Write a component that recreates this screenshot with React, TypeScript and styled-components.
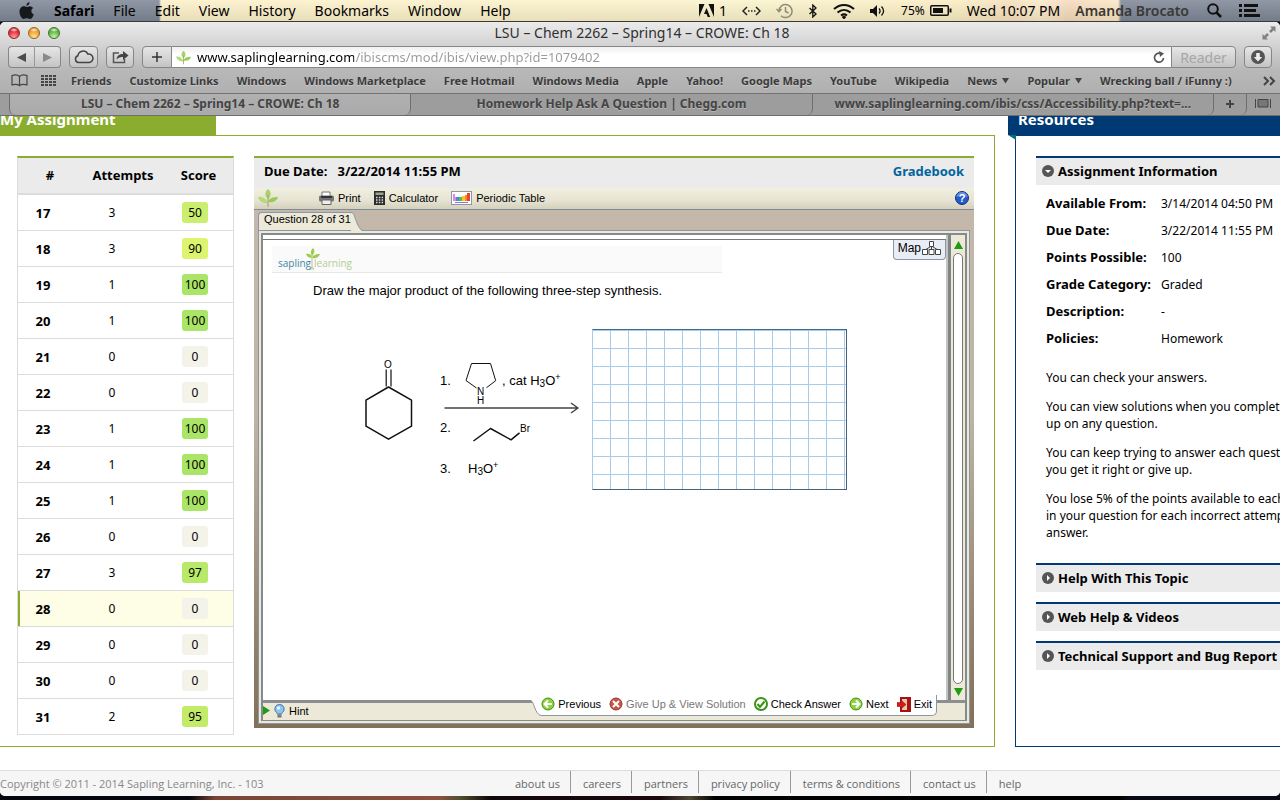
import React from 'react';
import styled, { createGlobalStyle, css } from 'styled-components';

const ui = '"Lucida Grande", "Noto Sans", "Open Sans", sans-serif';
const page = '"Noto Sans", "Open Sans", sans-serif';
const openSans = '"Open Sans", "Noto Sans", sans-serif';
const arial = '"Liberation Sans", Arial, sans-serif';
const green = '#8aad30';
const navy = '#003a75';

const GlobalStyle = createGlobalStyle`
  * { box-sizing: border-box; }
  body { margin: 0; background: #000; font-family: ${page}; font-size: 12px; color: #000; overflow-x: hidden; }
  button { font: inherit; color: inherit; border: 0; padding: 0; background: none; cursor: pointer; }
  a { color: inherit; text-decoration: none; }
  h1, h2, h3, p, dl, dd, ul { margin: 0; padding: 0; }
  svg { display: block; flex: none; }
`;

const Desktop = styled.div`
  min-height: 100vh;
  display: flex;
  flex-direction: column;
  overflow: hidden;
  padding-bottom: 4px;
  background: linear-gradient(90deg, #04060e 0 190px, #7a4535 215px, #8a5040 440px, #4f5032 460px, #10080a 490px, #1c080c 660px, #4b4733 690px, #000 715px, #000 1120px, #070a16 1130px);
`;

/* System menu bar */
const MenuBar = styled.header`
  height: 22px;
  flex: none;
  display: flex;
  align-items: center;
  padding: 0 20px 0 18px;
  font-family: ${ui};
  font-size: 14px;
  line-height: 20px;
  background:
    linear-gradient(180deg, rgba(255, 255, 255, 0.15), rgba(0, 0, 0, 0.08)),
    linear-gradient(90deg, #7d8696 0 159px, #fdf0c8 161px, #fbf3cb 60%, #f9ecc0 75%, #f6dfbb 1010px, #fbe9c8 1040px, #f5d9bb 1070px, #fbe6c2 1118px, #7d8696 1121px);
  border-bottom: 1px solid #3c3a35;
`;
const Menus = styled.nav`
  display: flex;
  align-items: center;
  gap: 19px;
`;
const MenuItem = styled.button<{ $bold?: boolean }>`
  font-weight: ${(p) => (p.$bold ? 700 : 400)};
`;
const Extras = styled.div`
  margin-left: auto;
  display: flex;
  align-items: center;
  gap: 15px;
`;
const Cluster = styled.span`
  display: flex;
  align-items: center;
  gap: 5px;
`;
const Small = styled.span`
  font-size: 12px;
`;
const UserName = styled.span`
  font-weight: 600;
  color: #3a3834;
`;

/* Browser window */
const Window = styled.div`
  flex: 1;
  display: flex;
  flex-direction: column;
  background: #fff;
  border-radius: 5px;
  overflow: hidden;
`;
const Chrome = styled.div`
  font-family: ${ui};
  background: linear-gradient(180deg, #ebebeb, #d2d2d2 24px, #b8b8b8 48px, #b0b0b0 71px);
`;
const TitleRow = styled.div`
  height: 24px;
  display: grid;
  grid-template-columns: 1fr auto 1fr;
  align-items: center;
  padding: 0 4px 2px 8px;
`;
const Lights = styled.div`
  display: flex;
  gap: 8px;
`;
const Light = styled.button<{ $c: string; $d: string; $l: string }>`
  width: 12px;
  height: 12px;
  border-radius: 50%;
  border: 1px solid ${(p) => p.$d};
  background:
    radial-gradient(ellipse 4px 2px at 50% 20%, rgba(255, 255, 255, 0.85), transparent),
    radial-gradient(circle at 50% 90%, ${(p) => p.$l}, ${(p) => p.$c} 60%);
`;
const WindowTitle = styled.h1`
  font-size: 14px;
  line-height: 20px;
  font-weight: 400;
  color: #2f2f2f;
`;
const FullScreen = styled.button`
  justify-self: end;
`;
const Toolbar = styled.div`
  display: flex;
  gap: 8px;
  padding: 0 8px;
  height: 22px;
`;
const ToolButton = styled.button<{ $w: number }>`
  width: ${(p) => p.$w}px;
  height: 22px;
  display: flex;
  align-items: center;
  justify-content: center;
  border: 1px solid #868686;
  border-radius: 4px;
  background: linear-gradient(180deg, #e6e6e6, #c4c4c4);
  color: #444;
`;
const Pair = styled.div`
  display: flex;
  button:first-child { border-radius: 4px 0 0 4px; border-right: 1px solid #999; }
  button:last-child { border-radius: 0 4px 4px 0; border-left: 0; }
`;
const AddressBar = styled.div`
  flex: 1;
  display: flex;
  min-width: 0;
  > button:first-child { border-radius: 4px 0 0 4px; }
  > button:last-child { border-radius: 0 4px 4px 0; color: #a6a6a6; font-size: 14px; }
`;
const Field = styled.label`
  flex: 1;
  min-width: 0;
  display: flex;
  align-items: center;
  gap: 6px;
  padding: 0 6px 0 4px;
  border: solid #868686;
  border-width: 1px 0;
  background: linear-gradient(180deg, #f0f0f0, #fff 40%);
`;
const UrlInput = styled.input`
  flex: 1;
  min-width: 0;
  border: 0;
  padding: 0;
  outline: 0;
  font: 13px/18px ${ui};
  color: transparent;
  background: linear-gradient(90deg, #000 157px, #999 157px);
  -webkit-background-clip: text;
  background-clip: text;
`;
const Bookmarks = styled.nav`
  height: 25px;
  display: flex;
  align-items: center;
  gap: 18px;
  padding: 0 4px 0 11px;
  font-size: 11px;
  font-weight: 700;
  color: #3b3b3b;
  text-shadow: 0 1px 0 #c8c8c8;
  white-space: nowrap;
`;
const BookmarkTools = styled.div`
  display: flex;
  align-items: center;
  gap: 13px;
  margin-right: -3px;
`;
const Bookmark = styled.a`
  display: flex;
  align-items: center;
  gap: 5px;
`;
const More = styled.button`
  margin-left: auto;
`;
const Tabs = styled.div`
  height: 23px;
  display: flex;
  padding-left: 9px;
  border-top: 1px solid #747474;
  border-bottom: 1px solid #6e6e6e;
  background: #9d9d9d;
`;
const Tab = styled.button<{ $active?: boolean; $w?: number }>`
  flex: ${(p) => (p.$w ? `0 0 ${p.$w}px` : '1 1 0')};
  min-width: 0;
  display: flex;
  align-items: center;
  justify-content: center;
  padding-bottom: 2px;
  overflow: hidden;
  font-size: 12px;
  font-weight: 700;
  white-space: nowrap;
  color: #444;
  text-shadow: 0 1px 0 #b8b8b8;
  border-right: 1px solid #6e6e6e;
  border-radius: 0 0 6px 0;
  ${(p) =>
    p.$active &&
    css`
      background: linear-gradient(180deg, #b0b0b0, #aaa);
      border-left: 1px solid #6e6e6e;
      border-radius: 0 0 6px 6px;
    `}
  &:last-child { border-right: 0; }
`;

/* Page */
const Body = styled.main`
  display: flex;
  gap: 13px;
`;
const Assignment = styled.section`
  flex: 1;
  min-width: 0;
`;
const SectionTab = styled.h2<{ $c: string; $w?: number; $pad?: number }>`
  height: 19px;
  width: ${(p) => (p.$w ? `${p.$w}px` : 'auto')};
  padding-left: ${(p) => p.$pad ?? 0}px;
  overflow: hidden;
  background: ${(p) => p.$c};
  color: #fff;
  font-size: 15px;
  line-height: 6px;
  white-space: nowrap;
`;
const AssignmentBox = styled.div`
  display: flex;
  align-items: flex-start;
  gap: 20px;
  padding: 20px 20px 11px 17px;
  border: 1px solid ${green};
  border-left: 0;
`;

const ScoreTable = styled.table`
  width: 217px;
  flex: none;
  border-collapse: separate;
  border-spacing: 0;
  table-layout: fixed;
  border: 1px solid #dcdcdc;
  border-top: 2px solid ${green};
  border-bottom: 0;
  th, td { padding: 0; text-align: center; }
  th { font-size: 13px; }
  thead th { height: 37px; padding-bottom: 2px; background: #ebebeb; border-bottom: 2px solid #dcdcdc; }
`;
const NumHead = styled.th`
  width: 64px;
`;
const AttemptHead = styled.th`
  width: 82px;
`;
const Row = styled.tr<{ $current?: boolean }>`
  > * { height: 36px; border-bottom: 1px solid #dcdcdc; }
  ${(p) =>
    p.$current &&
    css`
      background: #fefde6;
      > th { box-shadow: inset 2px 0 0 ${green}; }
    `}
`;
const NumCell = styled.th`
  && { padding-right: 14px; }
`;
const AttemptCell = styled.td`
  && { padding-right: 22px; }
`;
const ScoreCell = styled.td`
  && { padding-right: 7px; }
`;
const Score = styled.span<{ $c: string }>`
  display: inline-block;
  min-width: 26px;
  padding: 0 3px;
  border-radius: 3px;
  line-height: 21px;
  background: ${(p) => p.$c};
`;

const Question = styled.article`
  flex: 1;
  min-width: 0;
  border-top: 2px solid ${green};
`;
const QuestionHead = styled.div`
  height: 30px;
  display: flex;
  justify-content: space-between;
  padding: 0 10px;
  background: #ebebeb;
  font-size: 13px;
  font-weight: 700;
  line-height: 27px;
`;
const DueLabel = styled.span`
  margin-right: 10px;
`;
const GradeLink = styled.a`
  color: #00649d;
`;
const AppBar = styled.div`
  height: 22px;
  display: flex;
  align-items: center;
  gap: 13px;
  padding: 0 5px 2px 4px;
  background: linear-gradient(180deg, #f1efdf, #e6e3d2 60%, #d3d0bd);
  border-bottom: 1px solid #7f8b99;
  font-family: ${arial};
  font-size: 11px;
`;
const LeafMark = styled.span`
  margin-right: 28px;
`;
const IconButton = styled.button<{ $muted?: boolean }>`
  display: flex;
  align-items: center;
  gap: 4px;
  white-space: nowrap;
  color: ${(p) => (p.$muted ? '#777' : '#000')};
`;
const HelpButton = styled.button`
  margin-left: auto;
`;
const Stage = styled.div`
  padding: 2px 4px 4px;
  background: linear-gradient(180deg, #c3b8aa 0%, #bfb3a3 40%, #8f7f6a 85%, #837058);
  font-family: ${arial};
`;
const QuestionTab = styled.div`
  display: flex;
  width: max-content;
  height: 18px;
  font-size: 11px;
  line-height: 12px;
`;
const TabLabel = styled.span`
  padding-left: 5px;
  background: #ece9d8;
  border: solid #8a97a6;
  border-width: 1px 0 0 1px;
  border-radius: 4px 0 0 0;
`;
const Frame = styled.div`
  padding: 2px;
  border: 1px solid #8a97a6;
  background: #ece9d8;
`;
const Inner = styled.div`
  border: 2px solid #868a8a;
  border-bottom-width: 1px;
`;
const Work = styled.div`
  display: flex;
  height: 468px;
  border-bottom: 3px solid #8b8f8f;
`;
const Sheet = styled.div`
  position: relative;
  flex: 1;
  min-width: 0;
  padding-top: 4px;
  background: #fff;
  border-right: 2px solid #c4c4c4;
`;
const SheetBody = styled.div`
  border-top: 1px solid #777;
`;
const BrandStrip = styled.div`
  width: 450px;
  height: 27px;
  margin: 6px 0 0 9px;
  padding: 1px 0 0 6px;
  background: #fafafa;
  border-bottom: 1px solid #e8e8e8;
`;
const Prompt = styled.p`
  margin: 9px 0 0 50px;
  font-size: 13px;
  line-height: 18px;
`;
const Drawing = styled.div`
  display: flex;
  margin: 29px 0 0 97px;
`;
const Canvas = styled.div`
  width: 255px;
  height: 161px;
  border: 1px solid #4a6076;
  border-top-color: #41688e;
  border-left-color: #a7cbee;
  background:
    linear-gradient(#a7cbee 1px, transparent 1px) 0 0 / 18px 18px,
    linear-gradient(90deg, #a7cbee 1px, transparent 1px) 17px 0 / 18px 18px;
`;
const MapButton = styled.button`
  position: absolute;
  top: 5px;
  right: 0;
  height: 20px;
  display: flex;
  align-items: center;
  gap: 1px;
  padding: 0 4px 3px 4px;
  font-size: 12px;
  background: #e9eef6;
  border: 1px solid #8a97a6;
  border-top: 0;
  border-radius: 0 0 4px 4px;
`;
const ScrollBar = styled.div`
  width: 17px;
  display: flex;
  flex-direction: column;
  align-items: center;
  gap: 4px;
  padding: 6px 0 4px;
  background: #ece9d8;
  border-left: 3px solid #808585;
`;
const Thumb = styled.div`
  flex: 1;
  width: 10px;
  background: #fff;
  border: 1px solid #777;
  border-radius: 5px;
`;
const StatusBar = styled.div`
  position: relative;
  height: 17px;
  display: flex;
  align-items: center;
  padding: 0 0 2px;
  font-size: 11px;
`;
const Actions = styled.div`
  position: absolute;
  right: 28px;
  top: -8px;
  height: 21px;
  display: flex;
`;
const ActionRow = styled.div`
  display: flex;
  align-items: center;
  gap: 8px;
  padding: 0 4px 2px 0;
  background: #fff;
  border: solid #8a97a6;
  border-width: 0 1px 1px 0;
  border-radius: 0 0 5px 0;
  button { gap: 3px; }
`;

const Resources = styled.aside`
  width: 272px;
  flex: none;
  display: flex;
  flex-direction: column;
  overflow: hidden;
`;
const ResourcesBox = styled.div`
  position: relative;
  flex: 1;
  margin-left: 7px;
  padding: 20px 0 0 20px;
  border: solid ${navy};
  border-width: 1px 0 1px 1px;
`;
const Fold = styled.svg`
  position: absolute;
  left: -8px;
  top: -1px;
`;
const Panel = styled.section`
  margin-bottom: 10px;
`;
const PanelHead = styled.button`
  width: 100%;
  height: 29px;
  display: flex;
  align-items: center;
  gap: 4px;
  padding: 0 0 2px 6px;
  border-top: 2px solid ${navy};
  background: #ebebeb;
  font-size: 13px;
  font-weight: 700;
  white-space: nowrap;
`;
const Facts = styled.dl`
  display: grid;
  grid-template-columns: 115px 1fr;
  padding: 5px 0 0 10px;
  margin-bottom: 17px;
  line-height: 27px;
  white-space: nowrap;
  dt { font-weight: 700; font-size: 13px; }
`;
const Note = styled.p`
  margin: 0 0 12px 10px;
  line-height: 17px;
  white-space: nowrap;
  &:last-child { margin-bottom: 22px; }
`;

const Footer = styled.footer`
  display: flex;
  height: 26px;
  margin-top: 23px;
  border-top: 1px solid #dcdcdc;
  background: #f6f6f6;
  font-family: ${openSans};
  font-size: 11px;
  line-height: 25px;
  white-space: nowrap;
`;
const Copyright = styled.span`
  flex: 0 0 503px;
  color: #888;
`;
const FooterLink = styled.a`
  height: 22px;
  padding: 0 10px 0 12px;
  color: #666;
  border-right: 1px solid #999;
  &:last-child { border: 0; }
`;

const bookmarks = ['Friends', 'Customize Links', 'Windows', 'Windows Marketplace', 'Free Hotmail', 'Windows Media', 'Apple', 'Yahoo!', 'Google Maps', 'YouTube', 'Wikipedia', 'News', 'Popular', 'Wrecking ball / iFunny :)'];

const rows: [number, number, number][] = [
  [17, 3, 50], [18, 3, 90], [19, 1, 100], [20, 1, 100], [21, 0, 0], [22, 0, 0], [23, 1, 100], [24, 1, 100],
  [25, 1, 100], [26, 0, 0], [27, 3, 97], [28, 0, 0], [29, 0, 0], [30, 0, 0], [31, 2, 95],
];
const scoreColors: Record<number, string> = { 0: '#f4f3ea', 50: '#caef6e', 90: '#ddf56e', 95: '#c2eb6a', 97: '#b9e968', 100: '#aae567' };

const facts = [
  ['Available From:', '3/14/2014 04:50 PM'],
  ['Due Date:', '3/22/2014 11:55 PM'],
  ['Points Possible:', '100'],
  ['Grade Category:', 'Graded'],
  ['Description:', '-'],
  ['Policies:', 'Homework'],
];
const notes = [
  ['You can check your answers.'],
  ['You can view solutions when you complete', 'up on any question.'],
  ['You can keep trying to answer each question', 'you get it right or give up.'],
  ['You lose 5% of the points available to each', 'in your question for each incorrect attempt', 'answer.'],
];
const footerLinks = ['about us', 'careers', 'partners', 'privacy policy', 'terms & conditions', 'contact us', 'help'];

const Leaf = ({ size = 16 }: { size?: number }) => (
  <svg width={size} height={size} viewBox="0 0 20 20">
    <path d="M10 11C6 8 7 3 10 1c3 2 4 7 0 10z" fill="#a5d46a" />
    <path d="M10 15C8 10 4 8 0 9c1 4 5 7 10 6z" fill="#b4db7e" />
    <path d="M10 14c1-4 5-5 10-5-1 4-5 6-10 5z" fill="#98cc5a" />
    <path d="M10 7v12" stroke="#b9a56c" strokeWidth="1.2" />
  </svg>
);

const Brand = () => (
  <svg width="74" height="26" viewBox="278 247 74 26">
    <path d="M312 256c-2-3-1-6 1-8 2 2 2 5-1 8zM312 258c-2 0-5-1-6-4 3-1 6 1 6 4zM312 258c1-3 4-4 8-4-1 3-4 5-8 4z" fill="#9ccb4e" />
    <path d="M312 255v12l-2 2h4l-2-2" stroke="#c9bd92" fill="none" />
    <text x="278" y="267" fontSize="10" fontFamily={openSans} fill="#3e86a5">sapling</text>
    <text x="314" y="267" fontSize="10" fontFamily={openSans} fill="#b0cd92">learning</text>
  </svg>
);

const Synthesis = () => (
  <svg width="232" height="161" viewBox="360 329 232 161" fontFamily={arial} fontSize="13" fill="#000" role="img" aria-label="Three-step synthesis from cyclohexanone">
    <g fill="none" stroke="#111" strokeLinejoin="round">
      <path d="M388.500 387l23 13.200v26l-23 13-22.500-13v-26z" strokeWidth="1.500" />
      <path d="M386.200 369.500v17M391 369.500v17" strokeWidth="1.200" />
      <path d="M476.500 388L466 380.500l5.500-17h19l5.200 17.200-9.200 7" />
      <path d="M473.500 441l17-12.500 20.500 11.300 8.500-7" strokeWidth="1.500" />
      <path d="M444.500 408H578M571 403l7 5-7 5" stroke="#444" strokeWidth="1.500" />
    </g>
    <g fontSize="10">
      <text x="384" y="368">O</text>
      <text x="477" y="395">N</text>
      <text x="477" y="404">H</text>
      <text x="520" y="432">Br</text>
    </g>
    <text x="440" y="385">1.</text>
    <text x="502" y="385">, cat H<tspan fontSize="10" dy="2">3</tspan><tspan dy="-2">O</tspan><tspan fontSize="9" dy="-5">+</tspan></text>
    <text x="440" y="432">2.</text>
    <text x="440" y="473">3.</text>
    <text x="468" y="473">H<tspan fontSize="10" dy="2">3</tspan><tspan dy="-2">O</tspan><tspan fontSize="9" dy="-5">+</tspan></text>
  </svg>
);

const Disc = ({ kind }: { kind: 'prev' | 'next' | 'check' | 'stop' }) => {
  const red = kind === 'stop';
  return (
    <svg width="14" height="14" viewBox="0 0 14 14">
      <circle cx="7" cy="7" r="6" fill={red ? '#c4574a' : kind === 'check' ? '#fff' : '#8fd33a'} stroke={red ? '#96382f' : '#379414'} strokeWidth={kind === 'check' ? 2 : 1} />
      {kind === 'check' && <path d="M3.500 7l2.500 3 4.500-5.500" fill="none" stroke="#379414" strokeWidth="2" />}
      {red && <path d="M4 4l6 6M10 4l-6 6" stroke="#fff" strokeWidth="2" />}
      {kind === 'prev' && <path d="M11 7H4M7 3.500L3.500 7 7 10.500" fill="none" stroke="#fff" strokeWidth="2" />}
      {kind === 'next' && <path d="M3 7h7M7 3.500L10.500 7 7 10.500" fill="none" stroke="#fff" strokeWidth="2" />}
    </svg>
  );
};

const Toggle = ({ open }: { open?: boolean }) => (
  <svg width="12" height="12" viewBox="0 0 12 12">
    <circle cx="6" cy="6" r="6" fill="#555" />
    <path d={open ? 'M3 5h6L6 8z' : 'M5 3v6l3-3z'} fill="#fff" />
  </svg>
);

const Triangle = ({ d, w = 9, h = 8 }: { d: string; w?: number; h?: number }) => (
  <svg width={w} height={h} viewBox={`0 0 ${w} ${h}`}><path d={d} fill="#1f9a12" /></svg>
);

export default function App() {
  return (
    <Desktop>
      <GlobalStyle />
      <MenuBar>
        <Menus>
          <MenuItem aria-label="Apple">
            <svg width="17" height="18" viewBox="0 0 17 18" fill="#16181c">
              <path d="M11.600 0c.2 1.800-1.400 3.800-3.200 3.800C8.200 2 9.800.2 11.600 0zM8.600 5c.8 0 1.800-.8 3.200-.8 1.300 0 2.500.7 3.300 1.800-2.600 1.500-2.200 5.300.7 6.400-.8 2.200-2.300 4.600-3.900 4.600-1.200 0-1.700-.7-3.100-.7s-2 .7-3.100.7C3.800 17 1.500 13 1.500 9.700c0-3.500 2.200-5.400 4.300-5.400C7.200 4.300 8 5 8.600 5z" />
            </svg>
          </MenuItem>
          <MenuItem $bold>Safari</MenuItem>
          {['File', 'Edit', 'View', 'History', 'Bookmarks', 'Window', 'Help'].map((m) => <MenuItem key={m}>{m}</MenuItem>)}
        </Menus>
        <Extras>
          <Cluster>
            <svg width="15" height="13" viewBox="0 0 15 13"><path d="M0 0h5.500L0 13zM9.500 0H15v13zM7.500 4l3.700 9H8.700L7.600 10H5z" fill="#111" /></svg>
            <span>1</span>
          </Cluster>
          <svg width="19" height="10" viewBox="0 0 19 10" fill="none" stroke="#222" strokeWidth="1.500"><path d="M5 1L1 5l4 4M14 1l4 4-4 4" /><path d="M6 5h8" strokeDasharray="1.500 1.500" /></svg>
          <svg width="17" height="16" viewBox="0 0 17 16" fill="none" stroke="#8f8b78" strokeWidth="1.500"><path d="M3 8a6.500 6.500 0 1 1 2 4.800M.5 6L3 8.700 5.500 6M9.500 4v4.500l3 1.500" /></svg>
          <svg width="10" height="14" viewBox="0 0 10 14" fill="none" stroke="#111" strokeWidth="1.300"><path d="M1.500 4l6.500 6-3.200 3V1L8 4l-6.500 6" /></svg>
          <svg width="22" height="16" viewBox="0 0 22 16" fill="none" stroke="#111" strokeWidth="2"><path d="M1 6c6-5.500 14-5.500 20 0M4.500 9.500c4-3.500 9-3.500 13 0M8 12.500c2-1.500 4-1.500 6 0" /><path d="M9.500 13.500L11 15l1.500-1.500" fill="#111" /></svg>
          <svg width="16" height="12" viewBox="0 0 16 12"><path d="M0 4h3l4-4v12L3 8H0z" fill="#111" /><path d="M9 3.500c1.300 1.500 1.300 3.500 0 5M11.500 1.500c2.500 2.700 2.500 6.300 0 9" fill="none" stroke="#111" strokeWidth="1.300" /></svg>
          <Cluster>
            <Small>75%</Small>
            <svg width="22" height="11" viewBox="0 0 22 11"><rect x=".75" y=".75" width="17.500" height="9.500" rx="1" fill="none" stroke="#111" strokeWidth="1.500" /><path d="M3 3h10v5H3zM19.500 3.500h2v4h-2z" fill="#111" /></svg>
          </Cluster>
          <span>Wed 10:07 PM</span>
          <UserName>Amanda Brocato</UserName>
          <svg width="20" height="15" viewBox="0 0 20 15" fill="none" stroke="#111" strokeWidth="2"><circle cx="9" cy="6" r="4.800" /><path d="M12.500 9.500L17 14" strokeWidth="2.500" /></svg>
          <svg width="21" height="13" viewBox="0 0 21 13" fill="#111"><path d="M0 0h3v3H0zM0 5h3v3H0zM0 10h3v3H0zM5 0h14v3H5zM5 5h12v3H5zM5 10h16v3H5z" /></svg>
        </Extras>
      </MenuBar>

      <Window>
        <Chrome>
          <TitleRow>
            <Lights>
              <Light $c="#e02a36" $d="#8a2a2c" $l="#ff9c9c" aria-label="Close" />
              <Light $c="#ee9d2c" $d="#8f6424" $l="#ffe79a" aria-label="Minimize" />
              <Light $c="#5fb344" $d="#3f6f2c" $l="#c8f7a2" aria-label="Zoom" />
            </Lights>
            <WindowTitle>LSU – Chem 2262 – Spring14 – CROWE: Ch 18</WindowTitle>
            <FullScreen aria-label="Full screen">
              <svg width="14" height="14" viewBox="0 0 14 14" fill="#808080" stroke="#808080"><path d="M8 .5h5.500V6zM.5 8v5.500H6z" stroke="none" /><path d="M8 6l3-3M6 8l-3 3" strokeWidth="2.500" /></svg>
            </FullScreen>
          </TitleRow>
          <Toolbar>
            <Pair>
              <ToolButton $w={27} aria-label="Back"><svg width="9" height="9"><path d="M9 0v9L0 4.500z" fill="#4a4a4a" /></svg></ToolButton>
              <ToolButton $w={26} aria-label="Forward"><svg width="9" height="9"><path d="M0 0v9l9-4.500z" fill="#8a8a8a" /></svg></ToolButton>
            </Pair>
            <ToolButton $w={29} aria-label="iCloud tabs">
              <svg width="20" height="14" viewBox="0 0 20 14" fill="none" stroke="#444" strokeWidth="1.500"><path d="M4.500 12.500a3.500 3.500 0 0 1-.6-6.800 5.200 5.200 0 0 1 9.800-1.700 4.300 4.300 0 0 1 1.800 8.500z" /></svg>
            </ToolButton>
            <ToolButton $w={28} aria-label="Share">
              <svg width="17" height="14" viewBox="0 0 17 14"><path d="M7 3H1.500v9.500h11V9" fill="none" stroke="#555" strokeWidth="1.500" /><path d="M4.500 9.500C5 5.500 7.500 4 11 4V1l5.500 4.500L11 10V7C8.500 7 6.500 7.500 4.500 9.500z" fill="#444" /></svg>
            </ToolButton>
            <AddressBar>
              <ToolButton $w={30} aria-label="Add bookmark"><svg width="10" height="10"><path d="M5 0v10M0 5h10" stroke="#333" strokeWidth="1.500" /></svg></ToolButton>
              <Field>
                <Leaf size={15} />
                <UrlInput aria-label="Address" defaultValue="www.saplinglearning.com/ibiscms/mod/ibis/view.php?id=1079402" />
                <svg width="12" height="12" viewBox="0 0 12 12"><path d="M10.500 7A4.500 4.500 0 1 1 7 2.300" fill="none" stroke="#555" strokeWidth="1.700" /><path d="M6 0l5 2.500L7 6z" fill="#555" /></svg>
              </Field>
              <ToolButton $w={65}>Reader</ToolButton>
            </AddressBar>
            <ToolButton $w={28} aria-label="Downloads">
              <svg width="14" height="14" viewBox="0 0 14 14"><circle cx="7" cy="7" r="7" fill="#555" /><path d="M5.200 3h3.600v4h2.400L7 11.500 2.800 7h2.400z" fill="#eee" /></svg>
            </ToolButton>
          </Toolbar>
          <Bookmarks>
            <BookmarkTools>
              <svg width="17" height="13" viewBox="0 0 17 13" fill="none" stroke="#444" strokeWidth="1.200"><path d="M8.500 2.500v9C6.500 10 4 10 1 10.800V1.500C4 .5 7 .8 8.500 2.500c1.500-1.700 4.500-2 7.500-1v9.300c-3-.8-5.500-.8-7.500.7" /></svg>
              <svg width="15" height="11" viewBox="0 0 15 11"><path d="M0 1h15M0 4h15M0 7h15M0 10h15" stroke="#444" strokeWidth="2" strokeDasharray="3 1" /></svg>
            </BookmarkTools>
            {bookmarks.map((b) => (
              <Bookmark key={b} href="#">
                {b}
                {(b === 'News' || b === 'Popular') && <svg width="7" height="6"><path d="M0 0h7L3.500 5.500z" fill="#444" /></svg>}
              </Bookmark>
            ))}
            <More aria-label="More bookmarks"><svg width="13" height="10" viewBox="0 0 13 10" fill="none" stroke="#444" strokeWidth="2"><path d="M1 1l4 4-4 4M7 1l4 4-4 4" /></svg></More>
          </Bookmarks>
          <Tabs>
            <Tab $active>LSU – Chem 2262 – Spring14 – CROWE: Ch 18</Tab>
            <Tab>Homework Help Ask A Question | Chegg.com</Tab>
            <Tab>www.saplinglearning.com/ibis/css/Accessibility.php?text=...</Tab>
            <Tab $w={33} aria-label="New tab"><svg width="8" height="8"><path d="M4 0v8M0 4h8" stroke="#444" strokeWidth="2" /></svg></Tab>
            <Tab $w={33} aria-label="Show all tabs"><svg width="16" height="9" viewBox="0 0 16 9" fill="#777" stroke="#444"><path d="M.5 0v9M15.500 0v9M3 .5h10v7.500H3z" /></svg></Tab>
          </Tabs>
        </Chrome>

        <Body>
          <Assignment>
            <SectionTab $c={green} $w={216}>My Assignment</SectionTab>
            <AssignmentBox>
              <ScoreTable>
                <thead>
                  <tr><NumHead>#</NumHead><AttemptHead>Attempts</AttemptHead><th>Score</th></tr>
                </thead>
                <tbody>
                  {rows.map(([n, attempts, score]) => (
                    <Row key={n} $current={n === 28}>
                      <NumCell scope="row">{n}</NumCell>
                      <AttemptCell>{attempts}</AttemptCell>
                      <ScoreCell><Score $c={scoreColors[score]}>{score}</Score></ScoreCell>
                    </Row>
                  ))}
                </tbody>
              </ScoreTable>

              <Question>
                <QuestionHead>
                  <span><DueLabel>Due Date:</DueLabel>3/22/2014 11:55 PM</span>
                  <GradeLink href="#">Gradebook</GradeLink>
                </QuestionHead>
                <AppBar>
                  <LeafMark><Leaf size={20} /></LeafMark>
                  <IconButton>
                    <svg width="15" height="14" viewBox="0 0 15 14"><path d="M3 5V1h8v4" fill="#fff" stroke="#777" /><rect y="4.500" width="15" height="6" rx="1.500" fill="#777" /><path d="M2 6h11" stroke="#333" strokeWidth="2" /><path d="M3 9h9v4.500H3z" fill="#eee" stroke="#666" /></svg>
                    Print
                  </IconButton>
                  <IconButton>
                    <svg width="11" height="14" viewBox="0 0 11 14"><rect width="11" height="14" fill="#2c2c2c" /><path d="M1.500 1.500h8v2.500h-8z" fill="#9aa58e" /><path d="M2 6.500h8M2 9h8M2 11.500h8" stroke="#ddd" strokeWidth="1.300" strokeDasharray="1.500 1.300" /></svg>
                    Calculator
                  </IconButton>
                  <IconButton>
                    <svg width="21" height="14" viewBox="0 0 21 14"><rect x=".5" y=".5" width="20" height="13" fill="#fff" stroke="#8a97a6" /><path d="M2 3h2v3h2v4H2z" fill="#d58ae0" /><path d="M5 6h4v4H5z" fill="#4a86e8" /><path d="M8 6h4v4H8z" fill="#4fc04f" /><path d="M11 5h3v5h-3z" fill="#f5c32c" /><path d="M14 4h3v6h-3z" fill="#f58a2c" /><path d="M16 2h3v8h-3z" fill="#e84433" /><path d="M4 11h13v1H4z" fill="#a06ad0" /></svg>
                    Periodic Table
                  </IconButton>
                  <HelpButton aria-label="Help">
                    <svg width="14" height="14" viewBox="0 0 14 14"><circle cx="7" cy="7" r="6.500" fill="#2459c8" stroke="#17307c" /><path d="M1.500 6a5.500 5 0 0 1 11 0c-3-1.500-8-1.500-11 0z" fill="#8fb8f0" opacity=".6" /><text x="7" y="11" textAnchor="middle" fontSize="11" fontWeight="700" fontFamily={arial} fill="#fff">?</text></svg>
                  </HelpButton>
                </AppBar>
                <Stage>
                  <QuestionTab>
                    <TabLabel>Question 28 of 31</TabLabel>
                    <svg width="12" height="19" viewBox="0 0 12 19"><path d="M0 .5c3 0 3 3 5 8s3 8 6 10.500H0z" fill="#ece9d8" /><path d="M0 .5c3 0 3 3 5 8s3 8 6 9.500" fill="none" stroke="#8a97a6" /></svg>
                  </QuestionTab>
                  <Frame>
                    <Inner>
                      <Work>
                        <Sheet>
                          <SheetBody>
                            <BrandStrip><Brand /></BrandStrip>
                            <Prompt>Draw the major product of the following three-step synthesis.</Prompt>
                            <Drawing>
                              <Synthesis />
                              <Canvas />
                            </Drawing>
                          </SheetBody>
                          <MapButton>
                            Map
                            <svg width="19" height="14" viewBox="0 0 19 14" fill="#fff" stroke="#444"><path d="M9.500 5L3 9M9.500 5v4M9.500 5L16 9" /><path d="M7.500.5h4v5h-4zM.5 8.500h5v5h-5zM7 8.500h5v5H7zM13.500 8.500h5v5h-5z" /></svg>
                          </MapButton>
                        </Sheet>
                        <ScrollBar>
                          <button aria-label="Scroll up"><Triangle d="M4.500 0L9 8H0z" /></button>
                          <Thumb />
                          <button aria-label="Scroll down"><Triangle d="M0 0h9L4.500 8z" /></button>
                        </ScrollBar>
                      </Work>
                      <StatusBar>
                        <IconButton>
                          <Triangle d="M0 0l7 4.500L0 9z" w={7} h={9} />
                          <svg width="11" height="14" viewBox="0 0 11 14"><path d="M5.500.5a4.500 4.500 0 0 1 3 8c-.7.6-.8 1-.8 1.500H3.300c0-.5-.1-.9-.8-1.500a4.500 4.500 0 0 1 3-8z" fill="#8fc4ee" stroke="#4077a8" /><path d="M3.500 10.500h4v3h-4z" fill="#777" /><circle cx="4.500" cy="4" r="1.700" fill="#e8f5ff" /></svg>
                          Hint
                        </IconButton>
                        <Actions>
                          <svg width="10" height="21" viewBox="0 0 10 21"><path d="M0 0v5.500c3 1 4 14 10 15V0z" fill="#fff" /><path d="M0 5.500c3 1 4 14 10 15" fill="none" stroke="#8a97a6" /></svg>
                          <ActionRow>
                            <IconButton><Disc kind="prev" />Previous</IconButton>
                            <IconButton $muted><Disc kind="stop" />Give Up &amp; View Solution</IconButton>
                            <IconButton><Disc kind="check" />Check Answer</IconButton>
                            <IconButton><Disc kind="next" />Next</IconButton>
                            <IconButton>
                              <svg width="14" height="15" viewBox="0 0 14 15"><path d="M3 0h11v15H3z" fill="#a81212" /><path d="M5 2h5v11H5z" fill="#e9c8a8" /><path d="M0 5.500h4V3l5 4.500-5 4.500V9.500H0z" fill="#d81818" stroke="#8a0f0f" strokeWidth=".5" /></svg>
                              Exit
                            </IconButton>
                          </ActionRow>
                        </Actions>
                      </StatusBar>
                    </Inner>
                  </Frame>
                </Stage>
              </Question>
            </AssignmentBox>
          </Assignment>

          <Resources>
            <SectionTab $c={navy} $pad={10}>Resources</SectionTab>
            <ResourcesBox>
              <Fold width="8" height="5" viewBox="0 0 8 5"><path d="M0 0h8v5z" fill="#00707c" /></Fold>
              <Panel>
                <PanelHead><Toggle open />Assignment Information</PanelHead>
                <Facts>
                  {facts.map(([k, v]) => (
                    <React.Fragment key={k}><dt>{k}</dt><dd>{v}</dd></React.Fragment>
                  ))}
                </Facts>
                {notes.map((lines) => (
                  <Note key={lines[0]}>
                    {lines.map((l, i) => <React.Fragment key={l}>{i > 0 && <br />}{l}</React.Fragment>)}
                  </Note>
                ))}
              </Panel>
              <Panel><PanelHead><Toggle />Help With This Topic</PanelHead></Panel>
              <Panel><PanelHead><Toggle />Web Help &amp; Videos</PanelHead></Panel>
              <Panel><PanelHead><Toggle />Technical Support and Bug Report</PanelHead></Panel>
            </ResourcesBox>
          </Resources>
        </Body>

        <Footer>
          <Copyright>Copyright © 2011 - 2014 Sapling Learning, Inc. - 103</Copyright>
          {footerLinks.map((l) => <FooterLink key={l} href="#">{l}</FooterLink>)}
        </Footer>
      </Window>
    </Desktop>
  );
}
